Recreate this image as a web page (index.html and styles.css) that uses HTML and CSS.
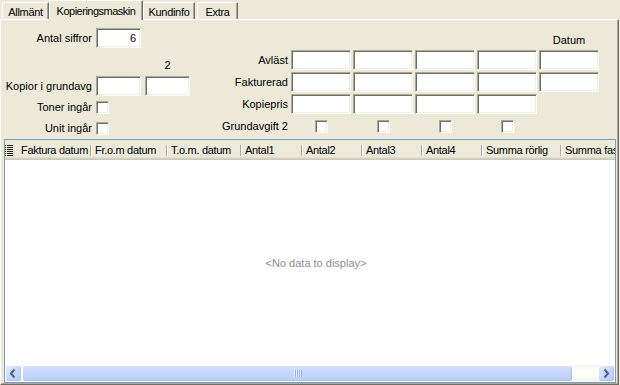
FILE: index.html
```html
<!DOCTYPE HTML>
<html>
<head>
	<meta charset="utf-8">
	<title>Kopieringsmaskin</title>
	<link rel="stylesheet" href="styles.css">
</head>
<body>
	<div class="tabs">
		<div class="tab t1">Allmänt</div>
		<div class="tab tsel">Kopieringsmaskin</div>
		<div class="tab t3">Kundinfo</div>
		<div class="tab t4">Extra</div>
	</div>
	<div class="page">
		<div class="form">
			<!-- left block -->
			<div class="fleft">
				<label class="lbl">Antal siffror</label>
				<input class="txt num" type="text" value="6">
				<span></span>

				<span></span>
				<span></span>
				<span class="colhead low">2</span>

				<label class="lbl">Kopior i grundavg</label>
				<input class="txt" type="text">
				<input class="txt" type="text">

				<label class="lbl">Toner ingår</label>
				<input class="chk" type="checkbox">
				<span></span>

				<label class="lbl">Unit ingår</label>
				<input class="chk" type="checkbox">
				<span></span>
			</div>
			<!-- right block -->
			<div class="fright">
				<span class="colhead datum">Datum</span>

				<label class="lbl">Avläst</label>
				<input class="txt" type="text">
				<input class="txt" type="text">
				<input class="txt" type="text">
				<input class="txt" type="text">
				<input class="txt" type="text">

				<label class="lbl">Fakturerad</label>
				<input class="txt" type="text">
				<input class="txt" type="text">
				<input class="txt" type="text">
				<input class="txt" type="text">
				<input class="txt" type="text">

				<label class="lbl">Kopiepris</label>
				<input class="txt" type="text">
				<input class="txt" type="text">
				<input class="txt" type="text">
				<input class="txt" type="text">
				<span></span>

				<label class="lbl">Grundavgift 2</label>
				<input class="chk mid" type="checkbox">
				<input class="chk mid" type="checkbox">
				<input class="chk mid" type="checkbox">
				<input class="chk mid" type="checkbox">
				<span></span>
			</div>
		</div>
		<!-- data grid -->
		<div class="grid">
			<div class="ghead">
				<div class="gind">
					<svg width="8" height="12" viewBox="0 0 8 12">
						<g fill="#222">
							<rect x="0" y="0" width="1" height="1"/><rect x="2" y="0" width="6" height="1"/>
							<rect x="0" y="2" width="1" height="1"/><rect x="2" y="2" width="6" height="1"/>
							<rect x="0" y="4" width="1" height="1"/><rect x="2" y="4" width="6" height="1"/>
							<rect x="0" y="6" width="1" height="1"/><rect x="2" y="6" width="6" height="1"/>
							<rect x="0" y="8" width="1" height="1"/><rect x="2" y="8" width="6" height="1"/>
							<rect x="0" y="10" width="1" height="1"/><rect x="2" y="10" width="6" height="1"/>
						</g>
					</svg>
				</div>
				<div class="gcol c1">Faktura datum</div>
				<div class="gcol c2">Fr.o.m datum</div>
				<div class="gcol c3">T.o.m. datum</div>
				<div class="gcol c4">Antal1</div>
				<div class="gcol c5">Antal2</div>
				<div class="gcol c5">Antal3</div>
				<div class="gcol c5">Antal4</div>
				<div class="gcol c8">Summa rörlig</div>
				<div class="gcol clast">Summa fast avgift</div>
			</div>
			<div class="gbody">&lt;No data to display&gt;</div>
			<div class="hscroll">
				<div class="sbtn">
					<svg width="15" height="15" viewBox="0 0 15 15"><path d="M8.5 3.5 L5 7.5 L8.5 11.5" fill="none" stroke="#4D6185" stroke-width="2"/></svg>
				</div>
				<div class="strack">
					<div class="sthumb"><span class="grip"></span></div>
				</div>
				<div class="sbtn">
					<svg width="15" height="15" viewBox="0 0 15 15"><path d="M5.5 3.5 L9 7.5 L5.5 11.5" fill="none" stroke="#4D6185" stroke-width="2"/></svg>
				</div>
			</div>
		</div>
	</div>
</body>
</html>
```

FILE: styles.css
```css
/* font choice */
* {
	font-family: "Liberation Sans", Arial, sans-serif;
	font-size: 11px;
}
body {
	margin: 0;
	width: 620px;
	height: 385px;
	overflow: hidden;
	background-color: #ECE9D8;
	color: black;
}

/* tab strip */
.tabs {
	display: flex;
	align-items: flex-end;
	height: 19px;
	padding-left: 2px;
}
.tab {
	box-sizing: border-box;
	height: 17px;
	padding-top: 2px;
	line-height: 14px;
	text-align: center;
	white-space: nowrap;
	letter-spacing: -0.3px;
	border-top: 1px solid #fff;
	border-left: 1px solid #fff;
	border-right: 1px solid #716F64;
	box-shadow: inset -1px 0 0 #ACA899;
}
.t1 {
	width: 47px;
}
.tsel {
	position: relative;
	z-index: 1;
	width: 94px;
	height: 20px;
	padding-top: 3px;
	margin-bottom: -1px;
	background-color: #ECE9D8;
	letter-spacing: -0.5px;
}
.t3 {
	width: 52px;
}
.t4 {
	width: 41px;
	margin-left: 2px;
}

/* tab page */
.page {
	box-sizing: border-box;
	width: 619px;
	height: 366px;
	border-top: 1px solid #fff;
	border-left: 1px solid #fff;
	border-right: 1px solid #716F64;
	border-bottom: 1px solid #716F64;
	box-shadow: inset -1px -1px 0 #ACA899;
}

/* form fields */
.form {
	display: flex;
	height: 119px;
	padding-left: 2px;
}
.fleft {
	display: grid;
	grid-template-columns: 89px 45px 45px;
	grid-template-rows: 20px 28px 20px 22px 20px;
	column-gap: 4px;
	padding-top: 8px;
}
.fright {
	display: grid;
	grid-template-columns: 81px repeat(5, 60px);
	grid-template-rows: 16px repeat(4, 20px);
	column-gap: 2px;
	row-gap: 2px;
	padding-top: 12px;
	margin-left: 18px;
}
.fright .lbl {
	padding-right: 1px;
}
.lbl {
	align-self: center;
	text-align: right;
	white-space: nowrap;
	line-height: 13px;
}
.colhead {
	text-align: center;
	line-height: 13px;
}
.low {
	align-self: end;
	margin-bottom: 4px;
}
.datum {
	grid-column: 6;
	align-self: center;
}
.txt {
	box-sizing: border-box;
	width: 100%;
	height: 20px;
	margin: 0;
	padding: 0 3px;
	border: 1px solid;
	border-color: #ACA899 #fff #fff #ACA899;
	box-shadow: inset 1px 1px 0 #716F64, inset -1px -1px 0 #F1EFE2;
	background-color: #fff;
	outline: none;
}
.num {
	text-align: right;
	padding-right: 4px;
}
.chk {
	-webkit-appearance: none;
	appearance: none;
	box-sizing: border-box;
	width: 13px;
	height: 13px;
	margin: 0;
	align-self: center;
	justify-self: start;
	border: 1px solid;
	border-color: #ACA899 #fff #fff #ACA899;
	box-shadow: inset 1px 1px 0 #716F64, inset -1px -1px 0 #F1EFE2;
	background-color: #fff;
}
.mid {
	justify-self: center;
}

/* data grid */
.grid {
	box-sizing: border-box;
	display: flex;
	flex-direction: column;
	width: 612px;
	height: 244px;
	margin-left: 3px;
	border: 1px solid #7F9DB9;
	background-color: #fff;
}
.ghead {
	display: flex;
	flex-shrink: 0;
	height: 20px;
	overflow: hidden;
	background-color: #EBEADB;
	box-shadow: inset 0 -1px 0 #CBC7B8, inset 0 -2px 0 #D6D2C2, inset 0 -3px 0 #E2DECD;
}
.gind {
	display: flex;
	align-items: center;
	flex-shrink: 0;
	width: 13px;
	padding-top: 1px;
	box-sizing: border-box;
}
.gcol {
	box-sizing: border-box;
	flex-shrink: 0;
	height: 20px;
	padding: 2px 0 0 4px;
	line-height: 17px;
	white-space: nowrap;
	overflow: hidden;
	letter-spacing: -0.3px;
	background-image: linear-gradient(#ACA899, #ACA899), linear-gradient(#fff, #fff);
	background-size: 1px 11px;
	background-position: right 0 top 5px, left 0 top 5px;
	background-repeat: no-repeat;
}
.c1 {
	width: 73px;
	padding-left: 3px;
	background-image: linear-gradient(#ACA899, #ACA899);
}
.c2 {
	width: 76px;
}
.c3 {
	width: 74px;
}
.c4 {
	width: 61px;
}
.c5 {
	width: 60px;
}
.c8 {
	width: 79px;
}
.clast {
	flex: 1;
	background-image: linear-gradient(#fff, #fff);
	background-position: left 0 top 5px;
}
.gbody {
	flex: 1;
	display: flex;
	align-items: center;
	justify-content: center;
	padding-left: 12px;
	color: #8D8D8D;
}

/* horizontal scrollbar */
.hscroll {
	display: flex;
	flex-shrink: 0;
	height: 17px;
	background: linear-gradient(#F3F1EC, #FEFEFB 25%, #FEFEFB 75%, #F3F1EC);
}
.sbtn {
	box-sizing: border-box;
	width: 17px;
	height: 17px;
	border: 1px solid #fff;
	border-radius: 3px;
	background: linear-gradient(135deg, #E3EBFE, #C4D4FC 60%, #B9CCFA);
	box-shadow: inset -1px -1px 0 #AFC3F3;
}
.sbtn svg {
	display: block;
}
.strack {
	flex: 1;
}
.sthumb {
	box-sizing: border-box;
	display: flex;
	align-items: center;
	justify-content: center;
	width: 551px;
	height: 17px;
	border: 1px solid #fff;
	border-radius: 3px;
	background: linear-gradient(#D3DFFD, #C6D6FC 50%, #BACDFB);
	box-shadow: inset -1px -1px 0 #A9BEF2;
}
.grip {
	width: 8px;
	height: 7px;
	background: repeating-linear-gradient(to right, #EEF4FE 0, #EEF4FE 1px, #8CAEF4 1px, #8CAEF4 2px);
}
```
